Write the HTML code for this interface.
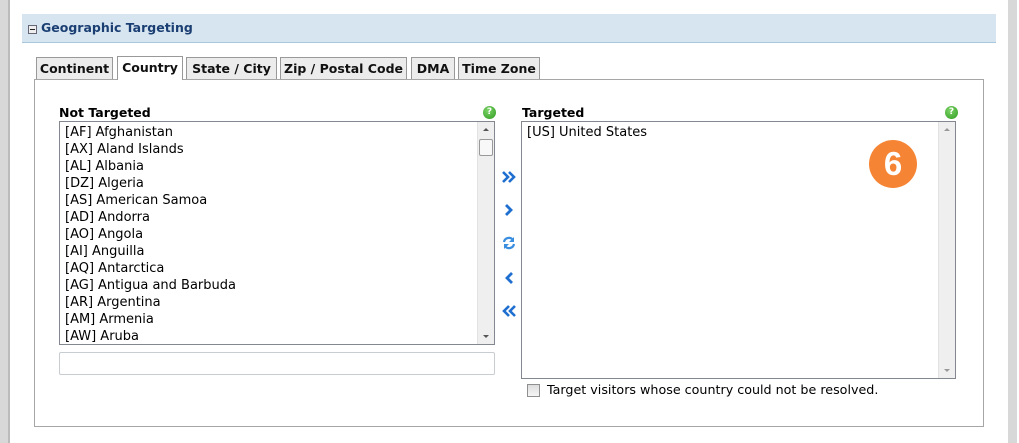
<!DOCTYPE html>
<html><head><style>
*{margin:0;padding:0;box-sizing:border-box}
body{width:1019px;height:443px;background:#fff;position:relative;overflow:hidden;font-family:"DejaVu Sans","Liberation Sans",sans-serif;font-size:13px;color:#000}
.dots{position:absolute;top:0;height:443px;background-image:radial-gradient(#c0c0c0 0.7px,transparent 0.9px);background-size:2px 2px;background-color:#f2f2f2}
.a{position:absolute}
.hdr{left:22px;top:14px;width:974px;height:29px;background:#d6e5f0;border-bottom:1px solid #a9c8de}
.hdr span{position:absolute;left:19px;top:6px;font-weight:bold;font-size:12.5px;color:#1b3f73}
.mb{position:absolute;left:6px;top:11px;width:9px;height:9px;border:1px solid #667;background:#eee}
.mb:after{content:"";position:absolute;left:1px;top:3px;width:5px;height:1px;background:#222}
.tab{position:absolute;top:57px;height:23px;border:1px solid #999;border-bottom:none;background:#ececec;font-weight:bold;font-size:12.5px;text-align:center;line-height:22px;color:#111}
.tab.act{background:#fff;height:24px;top:56px;z-index:2}
.panel{left:34px;top:79px;width:950px;height:348px;border:1px solid #a6a6a6}
.lbl{font-weight:bold;font-size:12.5px}
.list{border:1px solid #828790;background:#fff}
.it{height:17px;line-height:17px;padding-left:5px;white-space:nowrap}
.sb{position:absolute;right:0;top:0;bottom:0;width:17px;background:#efefef;border-left:1px solid #e2e2e2}
.up{position:absolute;left:5px;top:6px;width:0;height:0;border-left:3px solid transparent;border-right:3px solid transparent;border-bottom:3px solid #555}
.dn{position:absolute;left:5px;bottom:6px;width:0;height:0;border-left:3px solid transparent;border-right:3px solid transparent;border-top:3px solid #555}
.help{width:13px;height:13px;border-radius:50%;background:radial-gradient(circle at 40% 35%,#7fd46a,#2c9a1e);color:#fff;font-size:9px;font-weight:bold;text-align:center;line-height:13px}
.ic{position:absolute;left:501px;width:16px;height:16px}
</style></head><body>
<div class="dots" style="left:0;width:8px"></div>
<div class="a" style="left:8px;top:0;width:2px;height:443px;background:#bbb"></div>
<div class="dots" style="left:1008px;width:9px"></div>

<div class="a hdr"><div class="mb"></div><span>Geographic Targeting</span></div>

<div class="tab" style="left:36px;width:77px">Continent</div>
<div class="tab act" style="left:117px;width:66px">Country</div>
<div class="tab" style="left:186px;width:91px">State / City</div>
<div class="tab" style="left:280px;width:127px">Zip / Postal Code</div>
<div class="tab" style="left:411px;width:44px">DMA</div>
<div class="tab" style="left:458px;width:82px">Time Zone</div>
<div class="a panel"></div>

<div class="a lbl" style="left:59px;top:105px">Not Targeted</div>
<div class="a help" style="left:483px;top:106px">?</div>
<div class="a list" style="left:59px;top:121px;width:436px;height:224px;padding-top:2px">
<div class="it">[AF] Afghanistan</div><div class="it">[AX] Aland Islands</div><div class="it">[AL] Albania</div><div class="it">[DZ] Algeria</div><div class="it">[AS] American Samoa</div><div class="it">[AD] Andorra</div><div class="it">[AO] Angola</div><div class="it">[AI] Anguilla</div><div class="it">[AQ] Antarctica</div><div class="it">[AG] Antigua and Barbuda</div><div class="it">[AR] Argentina</div><div class="it">[AM] Armenia</div><div class="it">[AW] Aruba</div>
<div class="sb"><div style="position:absolute;left:1px;top:17px;width:14px;height:17px;border:1px solid #999;background:#f8f8f8;border-radius:2px"></div>
<div class="up"></div><div class="dn"></div></div>
</div>
<div class="a" style="left:59px;top:352px;width:436px;height:23px;border:1px solid #c8cdd2;border-radius:2px"></div>

<svg class="ic" style="top:169px" viewBox="0 0 16 16"><path d="M2 3l5 5-5 5M8 3l5 5-5 5" fill="none" stroke="#1f6fd0" stroke-width="2.6"/></svg>
<svg class="ic" style="top:202px" viewBox="0 0 16 16"><path d="M5 3l5 5-5 5" fill="none" stroke="#1f6fd0" stroke-width="2.8"/></svg>
<svg class="ic" style="top:235px" viewBox="0 0 16 16"><path d="M3 7a5 5 0 0 1 9-2M13 9a5 5 0 0 1-9 2" fill="none" stroke="#3a8ee0" stroke-width="2.2"/><path d="M13 2v5h-5zM3 14v-5h5z" fill="#3a8ee0"/></svg>
<svg class="ic" style="top:270px" viewBox="0 0 16 16"><path d="M11 3l-5 5 5 5" fill="none" stroke="#1f6fd0" stroke-width="2.8"/></svg>
<svg class="ic" style="top:303px" viewBox="0 0 16 16"><path d="M8 3l-5 5 5 5M14 3l-5 5 5 5" fill="none" stroke="#1f6fd0" stroke-width="2.6"/></svg>

<div class="a lbl" style="left:522px;top:105px">Targeted</div>
<div class="a help" style="left:945px;top:106px">?</div>
<div class="a list" style="left:521px;top:121px;width:435px;height:258px;padding-top:2px">
<div class="it">[US] United States</div>
<div class="sb"><div class="up" style="border-bottom-color:#999"></div><div class="dn" style="border-top-color:#999"></div></div>
</div>
<div class="a" style="left:869px;top:140px;width:48px;height:48px;border-radius:50%;background:#f58534;color:#fff;font-family:'Liberation Sans',sans-serif;font-weight:bold;font-size:33px;text-align:center;line-height:48px">6</div>

<div class="a" style="left:527px;top:384px;width:13px;height:13px;border:1px solid #8f8f8f;background:linear-gradient(#ddd,#f6f6f6)"></div>
<div class="a" style="left:547px;top:382px;font-size:12.7px">Target visitors whose country could not be resolved.</div>
</body></html>
